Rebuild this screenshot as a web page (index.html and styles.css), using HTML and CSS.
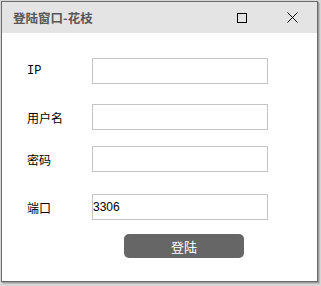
FILE: index.html
```html
<!DOCTYPE html>
<html>
<head>
<meta charset="utf-8">
<link rel="stylesheet" href="styles.css">
</head>
<body>
<div class="window">
  <div class="titlebar">
    <span class="title">登陆窗口-花枝</span>
    <div class="controls">
      <span class="ctl"><svg width="10" height="10" viewBox="0 0 10 10"><rect x="0.5" y="0.5" width="9" height="9" fill="none" stroke="#000" stroke-width="1"/></svg></span>
      <span class="ctl"><svg width="11" height="11" viewBox="0 0 11 11"><path d="M0.5 0.5 L10.5 10.5 M10.5 0.5 L0.5 10.5" stroke="#000" stroke-width="1"/></svg></span>
    </div>
  </div>
  <div class="content">
    <div class="row">
      <span class="label mono">IP</span>
      <input class="field" type="text">
    </div>
    <div class="row gap-a">
      <span class="label">用户名</span>
      <input class="field" type="text">
    </div>
    <div class="row gap-b">
      <span class="label">密码</span>
      <input class="field" type="password">
    </div>
    <div class="row gap-c">
      <span class="label">端口</span>
      <input class="field" type="text" value="3306">
    </div>
    <div class="actions">
      <button class="btn">登陆</button>
    </div>
  </div>
</div>
</body>
</html>
```
FILE: styles.css
```css
html, body {
  margin: 0;
  padding: 0;
}
body {
  width: 321px;
  height: 286px;
  background: #d6d6d6;
  font-family: "Noto Sans CJK SC", sans-serif;
  overflow: hidden;
}
.window {
  margin: 1px 0 0 1px;
  width: 315px;
  height: 279px;
  border: 1px solid #6a6a6a;
  background: #fff;
  box-shadow: 1px 1px 0 #9a9a9a, 2px 2px 0 #bdbdbd;
  display: flex;
  flex-direction: column;
}
.titlebar {
  height: 31px;
  background: #e4e4e4;
  display: flex;
  align-items: center;
  justify-content: space-between;
  flex-shrink: 0;
}
.title {
  margin-left: 11px;
  font-size: 12.5px;
  font-weight: bold;
  color: #585858;
  font-family: "Noto Sans CJK SC", sans-serif;
}
.controls {
  display: flex;
  height: 100%;
}
.ctl {
  width: 50px;
  display: flex;
  align-items: center;
  justify-content: center;
}
.ctl svg { display: block; }
.content {
  padding: 25px 0 0 25px;
  display: flex;
  flex-direction: column;
}
.row {
  display: flex;
  align-items: center;
  height: 26px;
}
.gap-a { margin-top: 20px; }
.gap-b { margin-top: 16px; }
.gap-c { margin-top: 22px; }
.label {
  width: 65px;
  font-size: 12px;
  color: #000;
}
.mono {
  font-family: "Liberation Mono", monospace;
}
.field {
  box-sizing: border-box;
  width: 176px;
  height: 26px;
  margin: 0;
  padding: 0;
  border: 1px solid #c4c4c8;
  background: #fff;
  font-family: "Liberation Sans", sans-serif;
  font-size: 12px;
  color: #000;
  outline: none;
}
.actions {
  margin-top: 14px;
  padding-left: 97px;
  display: flex;
}
.btn {
  width: 120px;
  height: 24px;
  border: none;
  border-radius: 5px;
  background: #666;
  color: #fff;
  font-family: "Noto Sans CJK SC", sans-serif;
  font-size: 13px;
  padding: 0;
}
```
